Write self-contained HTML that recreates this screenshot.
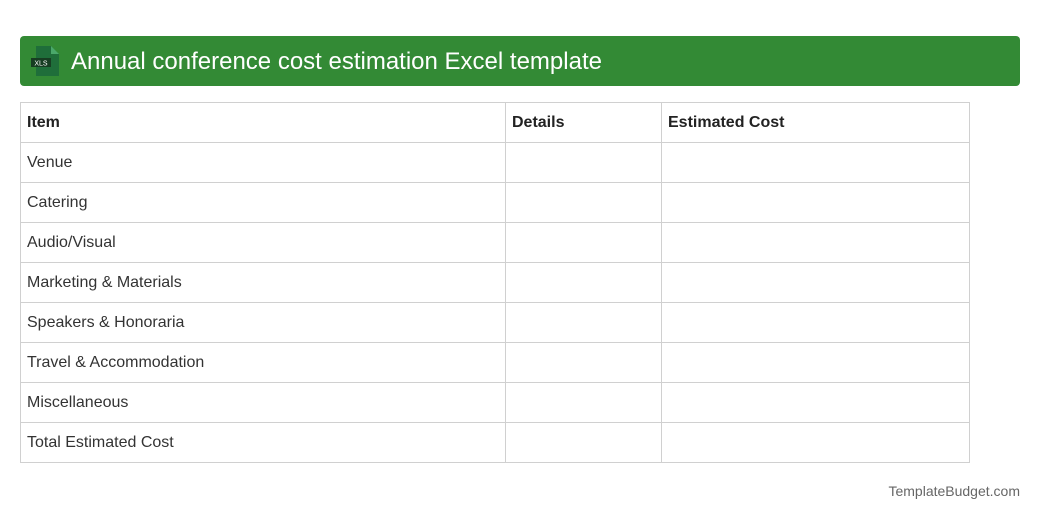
<!DOCTYPE html>
<html><head><style>
body{margin:0;width:1040px;height:520px;background:#fff;font-family:"Liberation Sans",Arial,sans-serif;position:relative;overflow:hidden}
.hdr{position:absolute;left:20px;top:36px;width:1000px;height:50px;background:#338a35;border-radius:4px}
.hdr span{position:absolute;left:51px;top:11px;font-size:24px;color:#fff;line-height:30px}
table{position:absolute;left:20px;top:102px;border-collapse:collapse;width:950px}
td{border:1px solid #d0d0d0;height:40px;padding:0 6px;font-size:16px;color:#333;box-sizing:border-box}
tr{height:40px}
tr:first-child td{font-weight:bold;color:#222}
.ft{position:absolute;right:20px;top:483px;font-size:14px;color:#666}
</style></head><body>
<div class="hdr">
<svg style="position:absolute;left:10px;top:9px" width="32" height="32" viewBox="0 0 32 32">
<path d="M6 1h15l8 8v22H6z" fill="#1f6e3a"/>
<path d="M21 1v8h8z" fill="#4aa86a"/>
<rect x="1" y="13" width="20" height="9" fill="#173d22"/>
<text x="11" y="20.5" font-size="7" fill="#fff" text-anchor="middle" font-family="Liberation Sans">XLS</text>
</svg>
<span>Annual conference cost estimation Excel template</span></div>
<table>
<tr><td style="width:485px">Item</td><td style="width:156px">Details</td><td>Estimated Cost</td></tr>
<tr><td>Venue</td><td></td><td></td></tr>
<tr><td>Catering</td><td></td><td></td></tr>
<tr><td>Audio/Visual</td><td></td><td></td></tr>
<tr><td>Marketing &amp; Materials</td><td></td><td></td></tr>
<tr><td>Speakers &amp; Honoraria</td><td></td><td></td></tr>
<tr><td>Travel &amp; Accommodation</td><td></td><td></td></tr>
<tr><td>Miscellaneous</td><td></td><td></td></tr>
<tr><td>Total Estimated Cost</td><td></td><td></td></tr>
</table>
<div class="ft">TemplateBudget.com</div>
</body></html>
